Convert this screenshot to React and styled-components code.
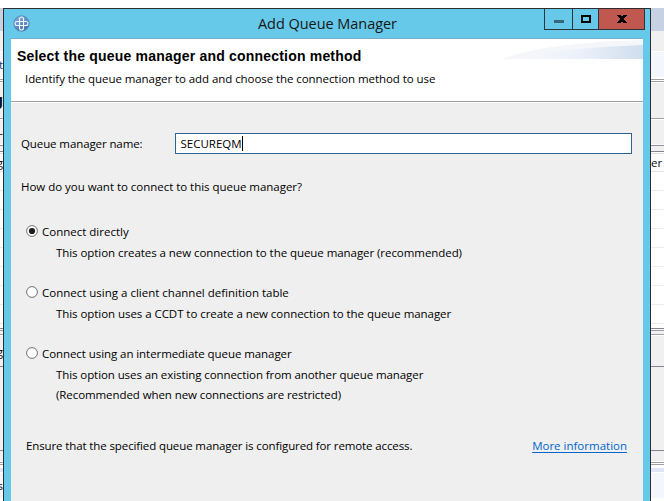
import React from "react";
import styled, { createGlobalStyle } from "styled-components";

const Global = createGlobalStyle`
  * { box-sizing: border-box; }
  body { margin: 0; overflow: hidden; background: #fff; }
`;

const Desktop = styled.div`
  display: grid;
  grid-template-columns: 3px 648px 13px;
  width: 664px;
  height: 501px;
  overflow: hidden;
  font-family: "Open Sans", "Noto Sans", sans-serif;
  color: #000;
`;

const Strip = styled.div`
  display: flex;
  flex-direction: column;
  overflow: hidden;
  min-width: 0;
`;

const Band = styled.div`
  flex: none;
  display: flex;
  align-items: center;
  justify-content: ${(p) => (p.$end ? "flex-end" : "flex-start")};
  height: ${(p) => p.$h}px;
  background: ${(p) => p.$bg};
  overflow: hidden;
  white-space: nowrap;
  font-size: ${(p) => (p.$big ? 16 : 11.5)}px;
  font-weight: ${(p) => (p.$big ? 700 : 400)};
  font-family: ${(p) => (p.$big ? '"Liberation Sans", sans-serif' : "inherit")};
  color: ${(p) => p.$fg || "#111"};
`;

const Window = styled.section`
  display: flex;
  flex-direction: column;
  margin-top: 8px;
  padding: 0 7px;
  height: 493px;
  background: #66c9e9;
  border: 1px solid #2d2d30;
  border-bottom: 0;
`;

const TitleBar = styled.header`
  flex: none;
  display: grid;
  grid-template-columns: 20px 1fr 101px;
  height: 29px;
  margin-right: -2px;
`;

const AppIcon = styled.svg`
  width: 17px;
  height: 17px;
  margin: 6px 0 0 1.5px;
`;

const Title = styled.h1`
  margin: 0 0 0 227px;
  font-size: 14.5px;
  font-weight: 400;
  line-height: 29px;
  white-space: nowrap;
  color: #161616;
  letter-spacing: -0.05px;
`;

const Controls = styled.div`
  display: grid;
  grid-template-columns: 28px 26px 45px;
  height: 21px;
  border: 1px solid #2e3438;
  border-top: 0;
`;

const Control = styled.button`
  display: flex;
  align-items: center;
  justify-content: center;
  padding: 0;
  border: 0;
  border-right: ${(p) => (p.$close ? "0" : "1px solid #2e3438")};
  background: ${(p) => (p.$close ? "#c1584f" : "transparent")};
`;

const Glyph = styled.svg`
  width: 10px;
  height: 10px;
`;

const Banner = styled.div`
  flex: none;
  display: grid;
  grid-template-columns: 1fr 142px;
  height: 64px;
  background: #fff;
  border-top: 1px solid #81a9c8;
  border-bottom: 1px solid #a0a0a0;
`;

const BannerText = styled.div`
  padding: 7px 0 0 6px;
  white-space: nowrap;
`;

const Heading = styled.h2`
  margin: 0;
  font: 700 14px/20px "Liberation Sans", Arial, sans-serif;
  letter-spacing: 0.2px;
`;

const Swoosh = styled.svg`
  width: 142px;
  height: 20px;
`;

const Line = styled.div`
  height: 20px;
  line-height: 20px;
  font-size: 11.5px;
  white-space: nowrap;
  padding-left: ${(p) => p.$x || 0}px;
  margin-top: ${(p) => p.$mt || 0}px;
  letter-spacing: ${(p) => p.$ls || 0}px;
`;

const Form = styled.main`
  flex: 1;
  border-top: 1px solid #fff;
  background: #efefef;
  padding: 30px 11px 0 10px;
`;

const Field = styled.label`
  display: grid;
  grid-template-columns: 154px 457px;
  height: 21px;
`;

const Input = styled.div`
  display: flex;
  align-items: center;
  height: 21px;
  padding-left: 4.5px;
  background: #fff;
  border: 1px solid #2f6390;
`;

const Caret = styled.i`
  width: 1px;
  height: 15px;
  background: #000;
`;

const Option = styled.div`
  display: grid;
  grid-template-columns: 16px 1fr;
  height: 20px;
  margin: ${(p) => p.$mt}px 0 1px 5px;
`;

const Radio = styled.svg`
  width: 12px;
  height: 12px;
  margin-top: 3px;
`;

const Footer = styled.footer`
  display: flex;
  justify-content: space-between;
  margin-top: 31px;
  padding: 0 5px;
`;

const Link = styled.a`
  height: 20px;
  line-height: 20px;
  font-size: 11.5px;
  color: #0066cc;
  white-space: nowrap;
  text-decoration: underline;
  text-underline-offset: 2px;
`;

const tableRows = Array.from({ length: 8 }, () => [
  [18, "#fff"],
  [1, "#ececec"],
]).flat();

/* [height, colour, text slot] from top to bottom */
const bands = [
  [8, "#fff"], [23, "#c6d2e3"], [20, "#f0f0f0"], [1, "#fff"],
  [25, "#f4f6fd", "tool"], [2, "#fff"], [1, "#a0a0a0"], [1, "#fff"],
  [1, "#a0a0a0"], [1, "#fff"], [35, "#f0f0f0", "head"], [1, "#a0a0a5"],
  [1, "#fff"], [24, "#f0f0f0", "dot"], [1, "#fafafa"], [1, "#929298"],
  [5, "#f0f0f0"], [1, "#84848c"], [1, "#fff"], [1, "#ddd"],
  [17, "#fcfcfd", "column"], [1, "#e2e2e2"], ...tableRows,
  [4, "#fff"], [1, "#84848c"], [1, "#f4f4f4"], [1, "#a0a0a5"],
  [3, "#f0f0f0"], [1, "#a0a0a5"], [1, "#fff"], [30, "#f0f0f0", "label"],
  [1, "#84848c"], [83, "#f0f0f0"], [1, "#84848c"], [10, "#f0f0f0"],
  [1, "#fff"], [1, "#a0a0a0"], [1, "#fff"], [1, "#a0a0a0"],
  [3, "#fff"], [4, "#e0e5f5"], [1, "#fff"], [25, "#f4f6fd", "status"],
  [3, "#fff"],
];

const leftText = { tool: "t", head: "g", dot: "-", column: "g", label: "g", status: "s" };
const rightText = { column: "er" };

function Background({ texts, end }) {
  return (
    <Strip>
      {bands.map(([h, bg, slot], i) => (
        <Band key={i} $h={h} $bg={bg} $end={end} $big={slot === "head"} $fg={slot === "tool" ? "#203a80" : undefined}>
          {texts[slot]}
        </Band>
      ))}
    </Strip>
  );
}

function RadioMark({ checked }) {
  return (
    <Radio viewBox="0 0 12 12">
      <circle cx="6" cy="6" r="5.4" fill="#fff" stroke="#707070" strokeWidth="1" />
      {checked && <circle cx="6" cy="6" r="3.1" fill="#1c1c1c" />}
    </Radio>
  );
}

export default function App() {
  return (
    <Desktop>
      <Global />
      <Background texts={leftText} end />
      <Window>
        <TitleBar>
          <AppIcon viewBox="0 0 17 17">
            <defs>
              <linearGradient id="orb" x1="0.2" y1="0" x2="0.8" y2="1">
                <stop offset="0" stopColor="#86acd6" />
                <stop offset="1" stopColor="#3a70b4" />
              </linearGradient>
            </defs>
            <circle cx="8.5" cy="8.5" r="7.7" fill="url(#orb)" stroke="#4a7fba" strokeWidth=".8" />
            <rect x="6.5" y="2" width="4" height="13" rx="2" fill="none" stroke="#f2f7fc" strokeWidth="1.1" />
            <rect x="2" y="6.5" width="13" height="4" rx="2" fill="none" stroke="#f2f7fc" strokeWidth="1.1" />
          </AppIcon>
          <Title>Add Queue Manager</Title>
          <Controls>
            <Control aria-label="Minimize">
              <Glyph viewBox="0 0 10 10"><path d="M0 6h10v3H0z" fill="#356879" /></Glyph>
            </Control>
            <Control aria-label="Maximize">
              <Glyph viewBox="0 0 10 10"><path d="M1 2h8v6H1z" fill="none" stroke="#000" strokeWidth="2" /></Glyph>
            </Control>
            <Control $close aria-label="Close">
              <Glyph viewBox="0 0 10 10" shapeRendering="crispEdges">
                <path d="M0 1h4v1h2V1h4v1H9v1H8v1H7v2h1v1h1v1h1v1H6V8H4v1H0V8h1V7h1V6h1V4H2V3H1V2H0z" fill="#000" />
              </Glyph>
            </Control>
          </Controls>
        </TitleBar>
        <Banner>
          <BannerText>
            <Heading>Select the queue manager and connection method</Heading>
            <Line $x={8} $mt={3} $ls={-0.07}>Identify the queue manager to add and choose the connection method to use</Line>
          </BannerText>
          <Swoosh viewBox="0 0 142 20">
            <defs>
              <linearGradient id="sweep">
                <stop offset="0" stopColor="#f8f8fb" />
                <stop offset=".5" stopColor="#edf2fa" />
                <stop offset="1" stopColor="#d0deed" />
              </linearGradient>
            </defs>
            <path d="M2 20Q40 4 142 1V20z" fill="#f4f6fa" />
            <path d="M8 20Q60 9 142 6V20z" fill="url(#sweep)" />
          </Swoosh>
        </Banner>
        <Form>
          <Field>
            <Line $mt={1} $ls={-0.1}>Queue manager name:</Line>
            <Input><Line>SECUREQM</Line><Caret /></Input>
          </Field>
          <Line $mt={23} $ls={-0.03}>How do you want to connect to this queue manager?</Line>
          <Option $mt={25}><RadioMark checked /><Line>Connect directly</Line></Option>
          <Line $x={35} $ls={-0.06}>This option creates a new connection to the queue manager (recommended)</Line>
          <Option $mt={20}><RadioMark /><Line>Connect using a client channel definition table</Line></Option>
          <Line $x={35} $ls={-0.055}>This option uses a CCDT to create a new connection to the queue manager</Line>
          <Option $mt={20}><RadioMark /><Line $ls={-0.07}>Connect using an intermediate queue manager</Line></Option>
          <Line $x={35} $ls={-0.085}>This option uses an existing connection from another queue manager</Line>
          <Line $x={35} $ls={-0.08}>(Recommended when new connections are restricted)</Line>
          <Footer>
            <Line $ls={-0.115}>Ensure that the specified queue manager is configured for remote access.</Line>
            <Link>More information</Link>
          </Footer>
        </Form>
      </Window>
      <Background texts={rightText} />
    </Desktop>
  );
}
